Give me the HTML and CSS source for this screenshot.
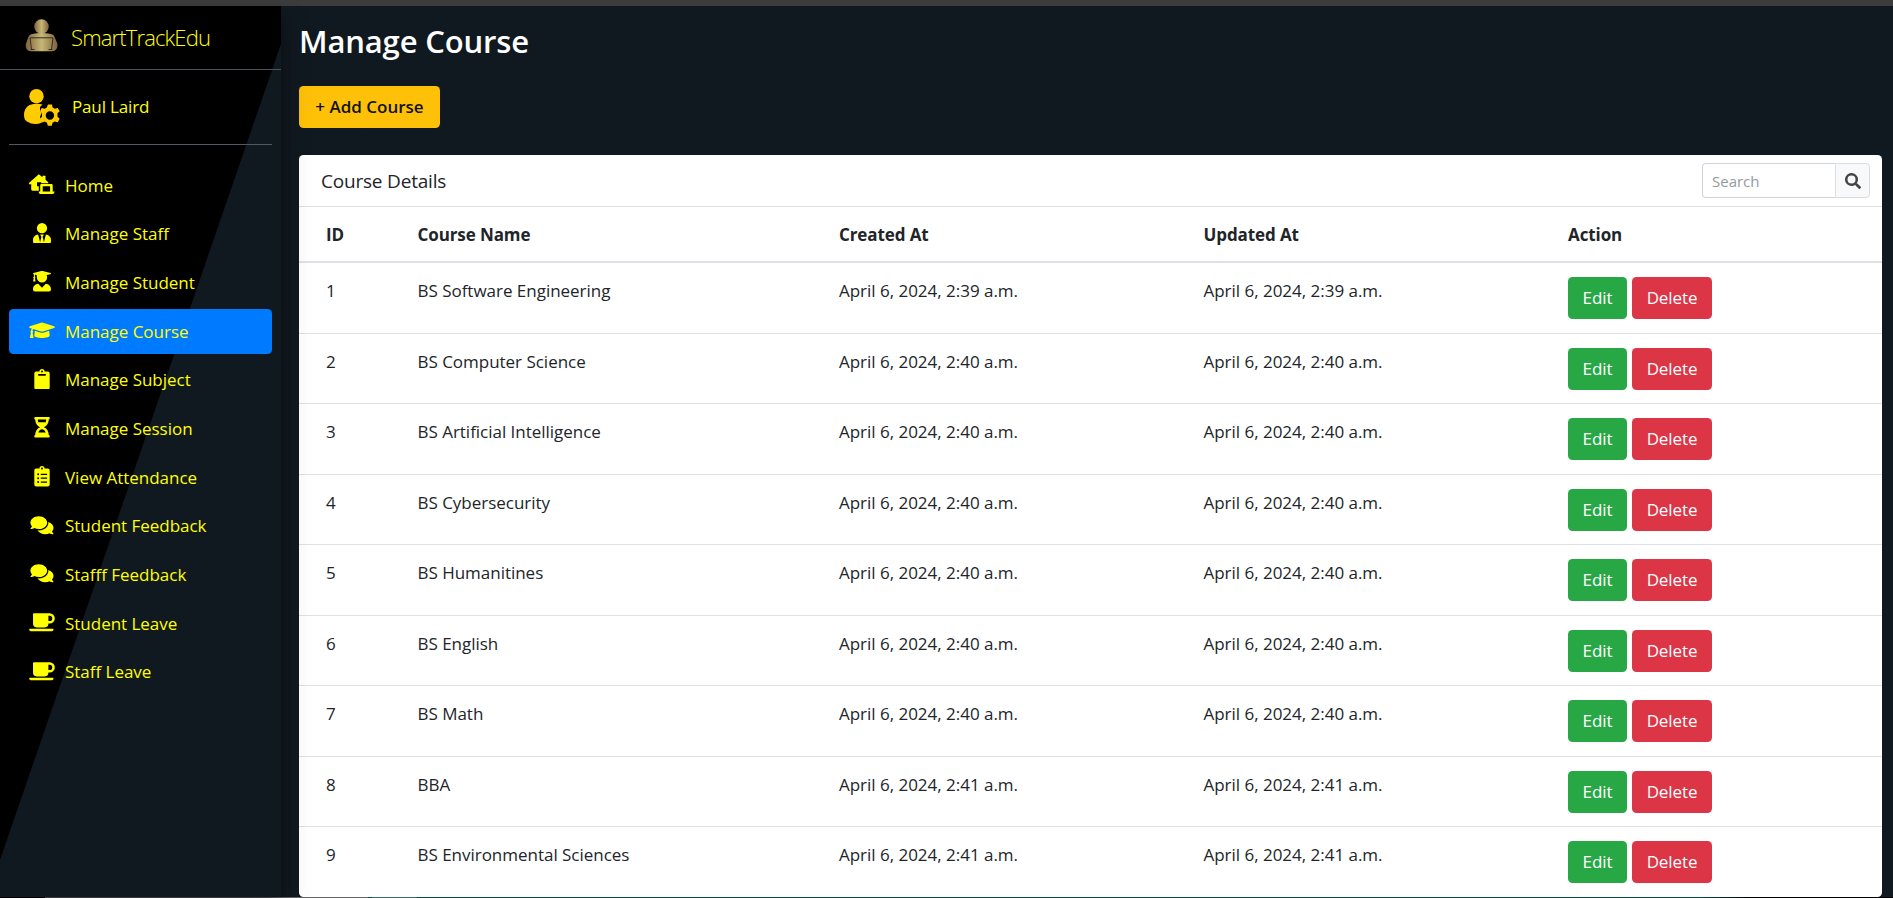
FILE: index.html
```html
<!DOCTYPE html>
<html lang="en">
<head>
<meta charset="utf-8">
<title>Manage Course</title>
<link rel="stylesheet" href="styles.css">
</head>
<body>
<div class="topbar"></div>
<div class="shell">
  <aside class="sidebar">
    <div class="brand">
      <svg class="brand-logo" viewBox="0 0 33 33"><defs><linearGradient id="g"><stop offset="0" stop-color="#80603a"/><stop offset=".5" stop-color="#c5b877"/><stop offset="1" stop-color="#80603a"/></linearGradient></defs><circle cx="16.5" cy="7.6" r="7.3" fill="url(#g)"/><path d="M7 15Q16.5 13 26 15Q29 15.500 30 19L32.500 25Q33 32 27 32.300H6Q0 32 .8 25L3 19Q4 15.500 7 15Z" fill="url(#g)"/><path d="M5 18.800h23M5 19l1.500 11.500M28 19l-1.500 11.500M5.500 30.500h4M23.500 30.500h4" fill="none" stroke="#302c24"/></svg>
      <span class="brand-text">SmartTrackEdu</span>
    </div>
    <div class="user">
      <svg class="user-icon" viewBox="0 0 36 37"><ellipse cx="12.500" cy="7.200" rx="7.200" ry="7.200"/><path d="M5.500 16Q12.500 14 18.500 15.500L16 18v4l1.500 2-1.500 4 2 5.500Q10 37 3 32.500Q0 31 0 26Q0 19 5.500 16Z"/><path fill-rule="evenodd" d="M24 15.500h4l.6 3 2.200 1.200 3-.8 1.900 3.300-2.200 2.100v3.400l2.200 2.100-2 3.500-2.900-.9-2.300 1.400-.7 3h-4l-.8-3-2.200-1.300-2.900.9-2-3.500 2.100-2.200v-3.200l-2-2.200 1.700-3.300 3.100.8 2-1.200ZM21.700 26.500a4.200 4.200 0 0 0 8.400 0a4.200 4.200 0 0 0-8.400 0Z"/></svg>
      <span class="user-name">Paul Laird</span>
    </div>
    <nav class="nav">
      <a class="item"><svg class="icon" viewBox="-2 0 30 20.500"><path fill-rule="evenodd" d="M9.800.2 13.500 3.200V1.800h3v4l2.800 2.500V9.200H12.200V8.300H8v4h1.800v4.400H3.400Q2.200 16.700 2.200 15.300V9.800L1 10.700-.3 9.200ZM12.300 10h10.200q1.200 0 1.200 1.200v6.300h1.800q0 2.600-2 2.600H11.600q-2 0-2-2.600h1.600v-6.300q0-1.200 1.100-1.200ZM13.700 12.300v5.200h7.400v-5.200Z"/></svg><span>Home</span></a>
      <a class="item"><svg class="icon" viewBox="0 0 448 512"><path d="M224 256a128 128 0 1 0 0-256 128 128 0 0 0 0 256Zm96 33-48 191-32-136 32-56h-96l32 56-32 136-48-191C57 292 0 350 0 422v42a48 48 0 0 0 48 48h352a48 48 0 0 0 48-48v-42c0-72-57-130-128-133Z"/></svg><span>Manage Staff</span></a>
      <a class="item"><svg class="icon" viewBox="0 0 448 512"><path d="M319 320l-95 96-96-96C57 323 0 381 0 454v10a48 48 0 0 0 48 48h352a48 48 0 0 0 48-48v-10c0-73-58-131-129-134ZM13 83l7 2v59a24 24 0 0 0-2 40L2 249c-2 6 2 11 6 11h48c4 0 8-5 6-11l-15-65c7-5 11-11 11-20s-5-15-12-19V91l50 12C86 120 96 140 96 160a128 128 0 0 0 256 0c0-20-5-40-14-57l97-20c18-4 18-26 0-31L242 3a83 83 0 0 0-37 0L13 52c-17 5-17 27 0 31Z"/></svg><span>Manage Student</span></a>
      <a class="item active"><svg class="icon" viewBox="0 0 640 512"><path d="M622 153 343 68a79 79 0 0 0-46 0L18 153c-24 8-24 39 0 47l48 15a93 93 0 0 0-17 47 32 32 0 0 0-5 54L19 428c-3 10 5 20 16 20h58c11 0 19-10 16-20L84 316a32 32 0 0 0-3-53c1-15 6-28 19-38l197 61a79 79 0 0 0 46 0l279-86c24-8 24-39 0-47ZM353 316a111 111 0 0 1-66 0l-145-45-14 113c0 35 86 64 192 64s192-29 192-64l-14-113Z"/></svg><span>Manage Course</span></a>
      <a class="item"><svg class="icon" viewBox="0 0 384 512"><path fill-rule="evenodd" d="M384 112v352a48 48 0 0 1-48 48H48a48 48 0 0 1-48-48V112a48 48 0 0 1 48-48h80a64 64 0 0 1 128 0h80a48 48 0 0 1 48 48ZM192 40a24 24 0 1 0 0 48 24 24 0 0 0 0-48Zm96 114v-20a12 12 0 0 0-12-12H108a12 12 0 0 0-12 12v20a12 12 0 0 0 12 12h168a12 12 0 0 0 12-12Z"/></svg><span>Manage Subject</span></a>
      <a class="item"><svg class="icon" viewBox="0 0 384 512"><path fill-rule="evenodd" d="M360 0H24a24 24 0 0 0-24 24v16a24 24 0 0 0 24 24c0 91 51 167 121 192C75 281 24 357 24 448a24 24 0 0 0-24 24v16a24 24 0 0 0 24 24h336a24 24 0 0 0 24-24v-16a24 24 0 0 0-24-24c0-91-51-167-121-192C309 231 360 155 360 64a24 24 0 0 0 24-24V24a24 24 0 0 0-24-24Zm-75 384H99c17-46 52-80 93-80s76 33 93 80ZM99 128c-7-20-11-41-11-64h208c0 23-4 45-11 64Z"/></svg><span>Manage Session</span></a>
      <a class="item"><svg class="icon" viewBox="0 0 384 512"><path fill-rule="evenodd" d="M336 64h-80a64 64 0 0 0-128 0H48a48 48 0 0 0-48 48v352a48 48 0 0 0 48 48h288a48 48 0 0 0 48-48V112a48 48 0 0 0-48-48ZM96 424a24 24 0 1 1 0-48 24 24 0 0 1 0 48Zm0-96a24 24 0 1 1 0-48 24 24 0 0 1 0 48Zm0-96a24 24 0 1 1 0-48 24 24 0 0 1 0 48Zm96-192a24 24 0 1 1 0 48 24 24 0 0 1 0-48Zm128 368a8 8 0 0 1-8 8H168a8 8 0 0 1-8-8v-16a8 8 0 0 1 8-8h144a8 8 0 0 1 8 8Zm0-96a8 8 0 0 1-8 8H168a8 8 0 0 1-8-8v-16a8 8 0 0 1 8-8h144a8 8 0 0 1 8 8Zm0-96a8 8 0 0 1-8 8H168a8 8 0 0 1-8-8v-16a8 8 0 0 1 8-8h144a8 8 0 0 1 8 8Z"/></svg><span>View Attendance</span></a>
      <a class="item"><svg class="icon" viewBox="0 0 576 512"><path d="M416 192c0-88-93-160-208-160S0 104 0 192c0 34 14 66 38 92-13 30-35 54-36 54a8 8 0 0 0 6 14c37 0 67-12 89-25 33 16 70 25 111 25 115 0 208-72 208-160Zm122 220c24-26 38-58 38-92 0-67-54-124-130-148 13 112-98 212-238 212-12 0-23-1-34-2 32 58 106 98 194 98 41 0 78-9 111-25 22 13 52 25 89 25a8 8 0 0 0 6-14s-23-24-36-54Z"/></svg><span>Student Feedback</span></a>
      <a class="item"><svg class="icon" viewBox="0 0 576 512"><path d="M416 192c0-88-93-160-208-160S0 104 0 192c0 34 14 66 38 92-13 30-35 54-36 54a8 8 0 0 0 6 14c37 0 67-12 89-25 33 16 70 25 111 25 115 0 208-72 208-160Zm122 220c24-26 38-58 38-92 0-67-54-124-130-148 13 112-98 212-238 212-12 0-23-1-34-2 32 58 106 98 194 98 41 0 78-9 111-25 22 13 52 25 89 25a8 8 0 0 0 6-14s-23-24-36-54Z"/></svg><span>Stafff Feedback</span></a>
      <a class="item"><svg class="icon" viewBox="0 0 640 512"><path fill-rule="evenodd" d="M192 384h192a96 96 0 0 0 96-96h32a128 128 0 0 0 0-256H120a24 24 0 0 0-24 24v232a96 96 0 0 0 96 96ZM512 96a64 64 0 0 1 0 128h-32V96ZM48 480h512c48 0 61-64 36-64H12c-25 0-12 64 36 64Z"/></svg><span>Student Leave</span></a>
      <a class="item"><svg class="icon" viewBox="0 0 640 512"><path fill-rule="evenodd" d="M192 384h192a96 96 0 0 0 96-96h32a128 128 0 0 0 0-256H120a24 24 0 0 0-24 24v232a96 96 0 0 0 96 96ZM512 96a64 64 0 0 1 0 128h-32V96ZM48 480h512c48 0 61-64 36-64H12c-25 0-12 64 36 64Z"/></svg><span>Staff Leave</span></a>
    </nav>
  </aside>
  <main class="main">
    <h1 class="title">Manage Course</h1>
    <button class="btn add">+ Add Course</button>
    <section class="card">
      <header class="card-head">
        <h3 class="card-title">Course Details</h3>
        <div class="search"><input class="search-input" placeholder="Search"><button class="search-btn"><svg class="search-icon" viewBox="0 0 512 512"><path fill-rule="evenodd" d="M505 443 405 343c-4-4-10-7-17-7h-16a208 208 0 1 0-36 36v16c0 7 3 13 7 17l100 100c9 9 24 9 34 0l28-28c9-10 9-25 0-34ZM208 336a128 128 0 1 1 0-256 128 128 0 0 1 0 256Z"/></svg></button></div>
      </header>
      <table class="table">
        <colgroup><col class="c-id"><col class="c-name"><col class="c-date"><col class="c-date"><col></colgroup>
        <thead><tr><th>ID</th><th>Course Name</th><th>Created At</th><th>Updated At</th><th>Action</th></tr></thead>
        <tbody id="rows"></tbody>
      </table>
    </section>
  </main>
</div>
<div class="taskbar"></div>
<script src="rows.js"></script>
</body>
</html>
```
FILE: rows.js
```js
const courses = [
  ["BS Software Engineering", "2:39"], ["BS Computer Science", "2:40"],
  ["BS Artificial Intelligence", "2:40"], ["BS Cybersecurity", "2:40"],
  ["BS Humanitines", "2:40"], ["BS English", "2:40"], ["BS Math", "2:40"],
  ["BBA", "2:41"], ["BS Environmental Sciences", "2:41"]
];
document.getElementById("rows").innerHTML = courses.map(([name, time], i) => {
  const date = `<td class="date">April 6, 2024, ${time} a.m.</td>`;
  return `<tr><td>${i + 1}</td><td>${name}</td>${date}${date}<td><div class="actions"><button class="btn edit">Edit</button><button class="btn delete">Delete</button></div></td></tr>`;
}).join("");
```
FILE: styles.css
```css
* { box-sizing: border-box; }
body { margin: 0; height: 898px; overflow: hidden; background: #111920; font-family: "Open Sans", "Noto Sans", sans-serif; font-size: 17px; color: #212529; display: flex; flex-direction: column; }
.topbar { height: 6px; background: #3c3c3c; flex: none; }
.shell { display: flex; height: 891px; flex: none; }
.sidebar { width: 281px; flex: none; color: #ff0; background: #111920; position: relative; z-index: 1; box-shadow: 0 14px 28px rgba(0,0,0,.25), 0 10px 10px rgba(0,0,0,.22); isolation: isolate; }
.sidebar::before { content: ""; position: absolute; inset: 0; z-index: -1; background: #000; clip-path: polygon(0 0, 281px 0, 281px 38px, 0 854px); }
.brand { height: 64px; border-bottom: 1px solid #4b545c; padding: 0 0 4px 25px; display: flex; align-items: center; }
.brand-logo { width: 33px; height: 33px; margin-right: 13px; }
.brand-text { font-size: 22px; font-weight: 300; letter-spacing: -.85px; line-height: 30px; padding-top: 2px; }
.user { height: 75px; margin: 0 9px; border-bottom: 1px solid #4f5962; padding-left: 15px; display: flex; align-items: center; }
.user-icon { width: 36px; height: 37px; fill: #fc0; margin-right: 12px; }
.user-name { letter-spacing: -.15px; padding-bottom: 1px; }
.nav { padding: 18px 9px 0; display: flex; flex-direction: column; gap: 4px; }
.item { height: 44.67px; border-radius: 4.500px; display: flex; align-items: center; padding-left: 18px; white-space: nowrap; }
.item.active { background: #007bff; }
.icon { width: 30px; height: 20.500px; margin: 0 8px 2px 0; fill: #ff0; }
.item span { letter-spacing: -.02px; }
.main { flex: 1; padding: 0 11px 0 18px; display: flex; flex-direction: column; align-items: flex-start; }
.title { margin: 15px 0 25px; font-size: 31px; line-height: 40px; font-weight: 600; color: #fff; letter-spacing: -.15px; }
.btn { font: 400 17px/24px "Open Sans", sans-serif; letter-spacing: -.1px; height: 42px; padding: 0; border: 0; border-radius: 4.500px; color: #fff; }
.add { width: 141px; background: #ffc107; color: #111; font-weight: 600; letter-spacing: 0; flex: none; }
.card { margin-top: 27px; width: 1583px; height: 742px; flex: none; background: #fff; border-radius: 4.500px; }
.card-head { height: 52px; border-bottom: 1px solid #dfdfdf; padding: 0 12px 0 22px; display: flex; justify-content: space-between; align-items: center; }
.card-title { margin: 0; font-size: 19px; font-weight: 400; letter-spacing: -.2px; }
.search { display: flex; width: 168px; height: 35px; }
.search-input { width: 133px; border: 1px solid #ced4da; border-right: 0; border-radius: 4px 0 0 4px; padding: 0 9px; font: 15px "Open Sans", sans-serif; outline: 0; }
.search-input::placeholder { color: #939ba2; }
.search-btn { width: 35px; padding: 0; background: #f8f9fa; border: 1px solid #ddd; border-radius: 0 4px 4px 0; display: grid; place-items: center; }
.search-icon { width: 16px; height: 16px; fill: #444; }
.table { width: 100%; table-layout: fixed; border-collapse: separate; border-spacing: 0; }
.c-id { width: 91.500px; } .c-name { width: 421.500px; } .c-date { width: 364.500px; }
th { height: 56px; padding: 1px 0 0 27px; text-align: left; font-weight: 700; letter-spacing: -.1px; border-bottom: 2px solid #dee2e6; }
td { height: 70.43px; padding: 14px 0 0 27px; vertical-align: top; line-height: 28px; letter-spacing: -.02px; border-bottom: 1px solid #dee2e6; }
tr:first-child td { height: 71px; }
tr:last-child td { border-bottom: 0; }
.actions { display: flex; gap: 5px; }
.edit { width: 59px; background: #28a745; }
.delete { width: 80px; background: #dc3545; }
.taskbar { height: 1px; background: linear-gradient(90deg, #000 0 45px, #666 45px 368px, #064b40 368px 372px, #3a6f66 372px 417px, #064b40 417px 1700px, #000 1750px); }
```
